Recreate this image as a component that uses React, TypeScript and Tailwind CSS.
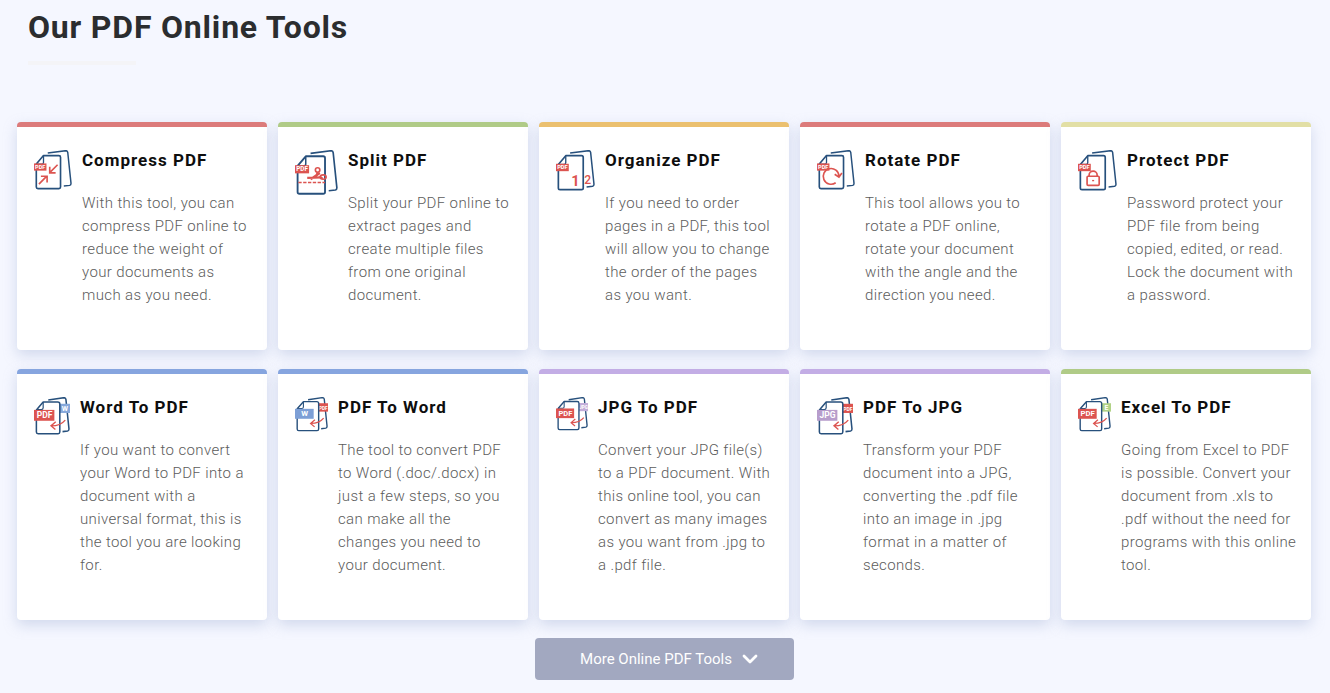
import type { ReactNode } from "react";

const NAVY = "#27507c";
const RED = "#dc5450";

type Tool = {
  title: string;
  text: string;
  border: string;
  iconSize: string;
  icon: ReactNode;
};

/* Two stacked pages with a small PDF label; children are drawn on the front page. */
function ActionIcon({ children, back }: { children: ReactNode; back?: ReactNode }) {
  return (
    <svg viewBox="0 0 116 121" className="block h-auto w-full" fill="none" aria-hidden="true">
      <path d="M42 9 97 2q5 0 6 5l10 95q0 5-4 6l-18 2" stroke={NAVY} strokeWidth="4.5" />
      {back}
      <path d="M29 17h47q5 0 5 5v91q0 5-5 5H12q-5 0-5-5V43Z" fill="#fff" stroke={NAVY} strokeWidth="5" strokeLinejoin="round" />
      <path d="M7 43h17q5 0 5-5V17" stroke={NAVY} strokeWidth="4" />
      <rect x="0" y="41" width="38" height="22" fill={RED} />
      <text x="19" y="58" textAnchor="middle" fontSize="17" fontWeight="700" fill="#fff" fontFamily="Roboto, sans-serif">PDF</text>
      {children}
    </svg>
  );
}

/* Front page with a large format label, back page with a small one, and an arrow between. */
function ConvertIcon({ front, frontFill, back, backFill, backSize }: { front: string; frontFill: string; back: string; backFill: string; backSize: number }) {
  return (
    <svg viewBox="0 0 106 111" className="block h-auto w-full" fill="none" aria-hidden="true">
      <path d="M42 9 88 2q5 0 6 5l9 87q0 5-4 6l-15 2" stroke={NAVY} strokeWidth="4.5" />
      <rect x="74" y="20" width="32" height="27" fill={backFill} />
      <text x="91" y="41" textAnchor="middle" fontSize={backSize} fontWeight="700" fill="#fff" fontFamily="Roboto, sans-serif">{back}</text>
      <path d="M27 15h43q6 0 6 6v82q0 5-5 5H12q-5 0-5-5V38Z" fill="#fff" stroke={NAVY} strokeWidth="4.5" strokeLinejoin="round" />
      <path d="M7 37h15q5 0 5-5V15" stroke={NAVY} strokeWidth="3.5" />
      <rect x="0" y="38" width="60" height="32" fill={frontFill} />
      <text x="31" y="62" textAnchor="middle" fontSize="25" fontWeight="700" fill="#fff" fontFamily="Roboto, sans-serif">{front}</text>
      <path d="M92 68Q78 85 51 85M64 73 50 85l13 11" stroke={RED} strokeWidth="4" />
    </svg>
  );
}

const TOOLS: Tool[] = [
  {
    title: "Compress PDF",
    text: "With this tool, you can compress PDF online to reduce the weight of your documents as much as you need.",
    border: "border-[#dc7b7b]",
    iconSize: "w-[38px]",
    icon: (
      <ActionIcon>
        <path d="M15 104 39 80M21 80h19v19M72 45 48 69M48 51v19h18" stroke={RED} strokeWidth="5" />
      </ActionIcon>
    ),
  },
  {
    title: "Split PDF",
    text: "Split your PDF online to extract pages and create multiple files from one original document.",
    border: "border-[#b0cb87]",
    iconSize: "w-[43px]",
    icon: (
      <ActionIcon>
        <path d="M9 88h72" stroke={RED} strokeWidth="4" strokeDasharray="9 4" />
        <path d="m33 75 38-1M42 79l25-17" stroke={RED} strokeWidth="6" />
        <path d="m58 69 3-10M66 72l9 5" stroke={RED} strokeWidth="5" />
        <circle cx="61" cy="54" r="6" stroke={RED} strokeWidth="4.5" />
        <ellipse cx="76" cy="73" rx="8" ry="6" stroke={RED} strokeWidth="4.5" />
      </ActionIcon>
    ),
  },
  {
    title: "Organize PDF",
    text: "If you need to order pages in a PDF, this tool will allow you to change the order of the pages as you want.",
    border: "border-[#ebc06f]",
    iconSize: "w-[39px]",
    icon: (
      <ActionIcon
        back={<text x="94" y="101" textAnchor="middle" fontSize="36" fontWeight="500" fill={RED} fontFamily="Roboto, sans-serif">2</text>}
      >
        <text x="58" y="108" textAnchor="middle" fontSize="43" fontWeight="700" fill={RED} fontFamily="Roboto, sans-serif">1</text>
      </ActionIcon>
    ),
  },
  {
    title: "Rotate PDF",
    text: "This tool allows you to rotate a PDF online, rotate your document with the angle and the direction you need.",
    border: "border-[#dc7b7b]",
    iconSize: "w-[38px]",
    icon: (
      <ActionIcon>
        <path d="M57 100A24 24 0 1 1 67 80M54 74l13 9 9-13" stroke={RED} strokeWidth="5" />
      </ActionIcon>
    ),
  },
  {
    title: "Protect PDF",
    text: "Password protect your PDF file from being copied, edited, or read. Lock the document with a password.",
    border: "border-[#e2dfa5]",
    iconSize: "w-[39px]",
    icon: (
      <ActionIcon>
        <rect x="27" y="78" width="36" height="27" rx="3" fill="#fff" stroke={RED} strokeWidth="5" />
        <path d="M33 78v-3a12 12 0 0 1 24 0v3" stroke={RED} strokeWidth="5" />
        <path d="M42 91h6" stroke={RED} strokeWidth="4" />
      </ActionIcon>
    ),
  },
  {
    title: "Word To PDF",
    text: "If you want to convert your Word to PDF into a document with a universal format, this is the tool you are looking for.",
    border: "border-[#86a5df]",
    iconSize: "w-[36px]",
    icon: <ConvertIcon front="PDF" frontFill={RED} back="W" backFill="#86a8db" backSize={21} />,
  },
  {
    title: "PDF To Word",
    text: "The tool to convert PDF to Word (.doc/.docx) in just a few steps, so you can make all the changes\u00a0you need to your\u00a0document.",
    border: "border-[#86a5df]",
    iconSize: "w-[33px]",
    icon: <ConvertIcon front="W" frontFill="#7d9fd6" back="PDF" backFill={RED} backSize={15} />,
  },
  {
    title: "JPG To PDF",
    text: "Convert your JPG file(s) to a PDF document. With this online tool, you can convert as many images as you want from .jpg to a .pdf file.",
    border: "border-[#c3ade5]",
    iconSize: "w-[32px]",
    icon: <ConvertIcon front="PDF" frontFill={RED} back="JPG" backFill="#c3add9" backSize={15} />,
  },
  {
    title: "PDF To JPG",
    text: "Transform your PDF document into a JPG, converting the .pdf file into an image in .jpg format in a matter of seconds.",
    border: "border-[#c3ade5]",
    iconSize: "w-[36px]",
    icon: <ConvertIcon front="JPG" frontFill="#b79dcc" back="PDF" backFill={RED} backSize={15} />,
  },
  {
    title: "Excel To PDF",
    text: "Going from Excel to PDF is possible. Convert your document from .xls to .pdf without the need for programs with this online tool.",
    border: "border-[#b0cb87]",
    iconSize: "w-[33px]",
    icon: <ConvertIcon front="PDF" frontFill={RED} back="E" backFill="#b1d286" backSize={22} />,
  },
];

function ToolCard({ tool }: { tool: Tool }) {
  return (
    <article
      className={`flex items-start gap-[10px] rounded-[4px] border-t-[5px] bg-white pt-[21px] pr-3 pb-[43px] pl-[17px] shadow-[0_5px_14px_rgba(150,165,205,0.38)] ${tool.border}`}
    >
      <div className={`shrink-0 pt-[2px] ${tool.iconSize}`}>{tool.icon}</div>
      <div className="min-w-0 flex-1">
        <h2 className="text-[17px] leading-6 font-bold tracking-[1px] whitespace-nowrap text-[#0e0e0e]">{tool.title}</h2>
        <p className="mt-5 text-[15px] leading-[23px] font-light tracking-wide text-[#5c5c5c]">{tool.text}</p>
      </div>
    </article>
  );
}

export default function App() {
  return (
    <main className="min-h-screen bg-[#f5f7ff] pr-[19px] pb-[13px] pl-[17px] font-['Roboto',sans-serif]">
      <header className="pt-2 pl-[11px]">
        <h1 className="text-[32px] leading-[38px] font-bold tracking-wide text-[#2b2d2f]">Our PDF Online Tools</h1>
        <div className="mt-[15px] h-1 w-[108px] bg-[#f4f4f7]" />
      </header>
      <section className="mt-[57px] grid grid-cols-5 gap-x-[11px] gap-y-[19px]">
        {TOOLS.map((tool) => (
          <ToolCard key={tool.title} tool={tool} />
        ))}
      </section>
      <div className="mt-[18px] flex justify-center">
        <button type="button" className="flex h-[42px] w-[259px] items-center justify-center gap-[10px] rounded-[4px] bg-[#a2a8c0] pl-[10px] text-[15px] text-white">
          More Online PDF Tools
          <svg viewBox="0 0 16 10" className="h-[10px] w-4" fill="none" stroke="#fff" strokeWidth="2.8" strokeLinecap="round" strokeLinejoin="round" aria-hidden="true">
            <path d="m2 2 6 6 6-6" />
          </svg>
        </button>
      </div>
    </main>
  );
}
